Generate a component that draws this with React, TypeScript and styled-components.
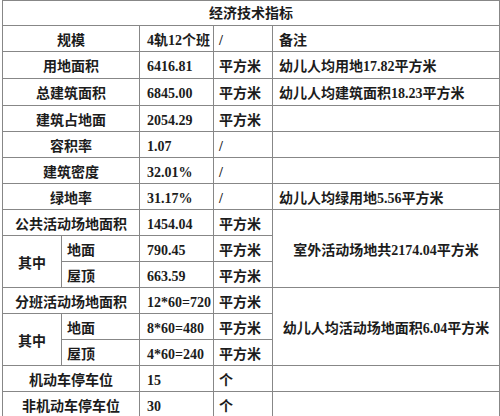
import React from "react";
import styled, { createGlobalStyle } from "styled-components";

const Global = createGlobalStyle`
  html, body { margin: 0; padding: 0; background: #ffffff; }
  body { font-family: "Liberation Serif", "Noto Sans CJK SC", serif; }
`;

const Page = styled.div`
  width: 500px;
  height: 416px;
  overflow: hidden;
  background: #ffffff;
  padding-left: 2px;
  box-sizing: border-box;
`;

const Grid = styled.div`
  display: grid;
  width: 498px;
  box-sizing: border-box;
  grid-template-columns: 58px 77px 73px 58px 226px;
  grid-template-rows: 24px 25px 26px 26px repeat(12, 25px);
  gap: 1px;
  padding: 1px;
  background: #878787;
`;

type Align = "left" | "center";

const Cell = styled.div<{ $align?: Align; $col?: number; $row?: number; $pad?: number }>`
  background: #ffffff;
  display: flex;
  align-items: center;
  justify-content: ${(p) => (p.$align === "left" ? "flex-start" : "center")};
  padding: 4px 0 0 ${(p) => (p.$align === "left" ? (p.$pad ?? 6) : 0)}px;
  box-sizing: border-box;
  grid-column: span ${(p) => p.$col ?? 1};
  grid-row: span ${(p) => p.$row ?? 1};
  font-family: "Liberation Serif", "Noto Sans CJK SC", serif;
  font-size: 14px;
  font-weight: 700;
  color: #1c1c1c;
  white-space: nowrap;
  line-height: 1;
`;

const Title = styled(Cell)`
  grid-column: span 5;
  font-weight: 600;
  padding-top: 2px;
`;

type Row = {
  label: string;
  value: string;
  unit: string;
  note?: string;
  noteSpan?: number;
};

const App: React.FC = () => {
  const simple = (r: Row, key: string) => (
    <React.Fragment key={key}>
      <Cell $col={2}>{r.label}</Cell>
      <Cell $align="left" $pad={7}>{r.value}</Cell>
      <Cell $align="left" $pad={5}>{r.unit}</Cell>
      <Cell
        $align={r.noteSpan ? "center" : "left"}
        $row={r.noteSpan ?? 1}
        $pad={6}
      >
        {r.note ?? ""}
      </Cell>
    </React.Fragment>
  );

  const sub = (label: string, value: string, key: string) => (
    <React.Fragment key={key}>
      <Cell $align="left" $pad={5}>{label}</Cell>
      <Cell $align="left" $pad={7}>{value}</Cell>
      <Cell $align="left" $pad={5}>平方米</Cell>
    </React.Fragment>
  );

  return (
    <Page>
      <Global />
      <Grid>
        <Title>经济技术指标</Title>
        {simple({ label: "规模", value: "4轨12个班", unit: "/", note: "备注" }, "a")}
        {simple({ label: "用地面积", value: "6416.81", unit: "平方米", note: "幼儿人均用地17.82平方米" }, "b")}
        {simple({ label: "总建筑面积", value: "6845.00", unit: "平方米", note: "幼儿人均建筑面积18.23平方米" }, "c")}
        {simple({ label: "建筑占地面", value: "2054.29", unit: "平方米" }, "d")}
        {simple({ label: "容积率", value: "1.07", unit: "/" }, "e")}
        {simple({ label: "建筑密度", value: "32.01%", unit: "/" }, "f")}
        {simple({ label: "绿地率", value: "31.17%", unit: "/", note: "幼儿人均绿用地5.56平方米" }, "g")}
        {simple({ label: "公共活动场地面积", value: "1454.04", unit: "平方米", note: "室外活动场地共2174.04平方米", noteSpan: 3 }, "h")}
        <Cell $row={2}>其中</Cell>
        {sub("地面", "790.45", "i")}
        {sub("屋顶", "663.59", "j")}
        {simple({ label: "分班活动场地面积", value: "12*60=720", unit: "平方米", note: "幼儿人均活动场地面积6.04平方米", noteSpan: 3 }, "k")}
        <Cell $row={2}>其中</Cell>
        {sub("地面", "8*60=480", "l")}
        {sub("屋顶", "4*60=240", "m")}
        {simple({ label: "机动车停车位", value: "15", unit: "个" }, "n")}
        {simple({ label: "非机动车停车位", value: "30", unit: "个" }, "o")}
      </Grid>
    </Page>
  );
};

export default App;
